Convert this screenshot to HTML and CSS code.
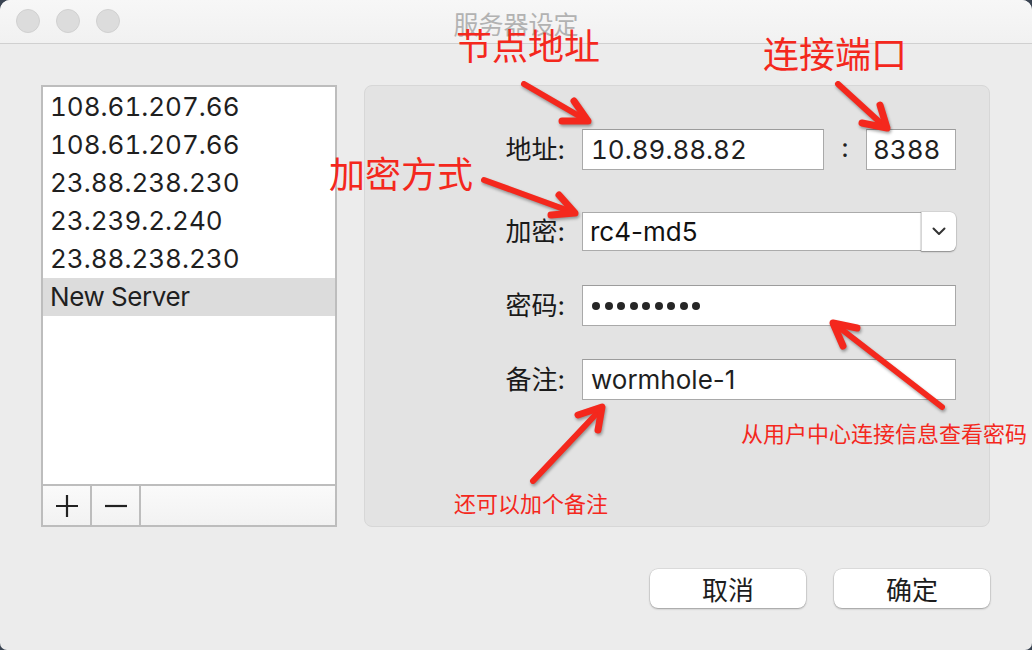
FILE: index.html
```html
<!DOCTYPE html>
<html lang="zh-CN">
<head>
<meta charset="utf-8">
<title>服务器设定</title>
<link rel="stylesheet" href="styles.css">
</head>
<body>
<div class="window">
  <header class="titlebar">
    <div class="lights">
      <span class="light"></span>
      <span class="light"></span>
      <span class="light"></span>
    </div>
    <div class="title">服务器设定</div>
    <div class="spacer"></div>
  </header>

  <main class="content">
    <div class="columns">
      <section class="server-list">
        <ul class="rows">
          <li class="row">108.61.207.66</li>
          <li class="row">108.61.207.66</li>
          <li class="row">23.88.238.230</li>
          <li class="row">23.239.2.240</li>
          <li class="row">23.88.238.230</li>
          <li class="row selected">New Server</li>
        </ul>
        <div class="toolbar">
          <button class="tool" aria-label="添加">
            <svg width="24" height="24" viewBox="0 0 24 24"><path d="M12 1v22M1 12h22" stroke="#222" stroke-width="2.2" fill="none"/></svg>
          </button>
          <button class="tool" aria-label="删除">
            <svg width="24" height="24" viewBox="0 0 24 24"><path d="M1 12h22" stroke="#222" stroke-width="2.2" fill="none"/></svg>
          </button>
          <div class="tool-fill"></div>
        </div>
      </section>

      <section class="panel">
        <div class="form-row row-first">
          <span class="label">地址:</span>
          <div class="address-group">
            <div class="field numeric address">10.89.88.82</div>
            <span class="colon">:</span>
            <div class="field numeric port">8388</div>
          </div>
        </div>
        <div class="form-row row-combo">
          <span class="label">加密:</span>
          <div class="combo">
            <div class="combo-text">rc4-md5</div>
            <div class="combo-btn">
              <svg width="14" height="9" viewBox="0 0 14 9"><path d="M1.5 1.5l5.5 5.5 5.5-5.5" stroke="#333" stroke-width="2" fill="none" stroke-linecap="round" stroke-linejoin="round"/></svg>
            </div>
          </div>
        </div>
        <div class="form-row">
          <span class="label">密码:</span>
          <div class="field password" aria-label="password">
            <span class="dot"></span><span class="dot"></span><span class="dot"></span><span class="dot"></span><span class="dot"></span><span class="dot"></span><span class="dot"></span><span class="dot"></span><span class="dot"></span>
          </div>
        </div>
        <div class="form-row">
          <span class="label">备注:</span>
          <div class="field">wormhole-1</div>
        </div>
      </section>
    </div>

    <div class="actions">
      <button class="btn">取消</button>
      <button class="btn">确定</button>
    </div>
  </main>

  <div class="annotations">
    <span class="note big note-addr">节点地址</span>
    <span class="note big note-port">连接端口</span>
    <span class="note big note-enc">加密方式</span>
    <span class="note small note-pass">从用户中心连接信息查看密码</span>
    <span class="note small note-remark">还可以加个备注</span>
    <svg class="arrows" width="1032" height="650" viewBox="0 0 1032 650">
      <g stroke="#f4281d" fill="none" stroke-linecap="round" stroke-linejoin="round">
        <path d="M524 84L586 120" stroke-width="6"/>
        <path d="M562 121L588 121L574 101" stroke-width="7"/>
        <path d="M838 84L884 126" stroke-width="6"/>
        <path d="M862 123L887 128L880 105" stroke-width="7"/>
        <path d="M484 180L572 212" stroke-width="6"/>
        <path d="M551 215L575 213L559 195" stroke-width="7"/>
        <path d="M942 407L836 325" stroke-width="6"/>
        <path d="M857 328L833 323L843 346" stroke-width="7"/>
        <path d="M533 481L600 410" stroke-width="6"/>
        <path d="M578 415L602 407L598 430" stroke-width="7"/>
      </g>
    </svg>
  </div>
</div>
</body>
</html>
```

FILE: styles.css
```css
* {
  box-sizing: border-box;
}

html, body {
  margin: 0;
  padding: 0;
}

body {
  width: 1032px;
  height: 650px;
  background: #3a4452;
  font-family: Inter, "Noto Sans CJK SC", sans-serif;
  color: #222;
  overflow: hidden;
}

.window {
  position: relative;
  width: 1032px;
  height: 650px;
  background: #ececec;
  border-radius: 10px 10px 7px 7px;
  overflow: hidden;
  display: flex;
  flex-direction: column;
}

/* ---------- Title bar ---------- */
.titlebar {
  height: 44px;
  flex: none;
  display: grid;
  grid-template-columns: 1fr auto 1fr;
  align-items: center;
  background: linear-gradient(#f7f7f7, #f1f1f1);
  border-bottom: 1px solid #d0d0d0;
}

.lights {
  display: flex;
  gap: 16px;
  padding-left: 16px;
  padding-bottom: 1px;
}

.light {
  width: 24px;
  height: 24px;
  border-radius: 50%;
  background: #dcdcdc;
  border: 1px solid #d0d0d0;
}

.title {
  font-family: "Noto Sans CJK SC", sans-serif;
  font-size: 25px;
  line-height: 30px;
  color: #b2b2b2;
  padding-top: 2px;
}

/* ---------- Content ---------- */
.content {
  flex: 1;
  padding: 41px 42px 0 41px;
  display: flex;
  flex-direction: column;
}

.columns {
  display: flex;
  gap: 27px;
  height: 442px;
}

/* Server list */
.server-list {
  width: 297px;
  height: 442px;
  background: #fff;
  border: 2px solid #bdbdbd;
  display: flex;
  flex-direction: column;
}

.rows {
  list-style: none;
  margin: 0;
  padding: 1px 0 0;
  flex: 1;
}

.row {
  height: 38px;
  line-height: 38px;
  padding-left: 7px;
  font-size: 26px;
  font-variant-numeric: tabular-nums;
  color: #1f1f1f;
  white-space: nowrap;
}

.row.selected {
  background: #dcdcdc;
  letter-spacing: -0.4px;
}

.toolbar {
  height: 41px;
  border-top: 2px solid #bdbdbd;
  display: flex;
  background: linear-gradient(#fafafa, #f2f2f2);
}

.tool {
  width: 49px;
  height: 100%;
  border: 0;
  border-right: 2px solid #bdbdbd;
  background: transparent;
  padding: 0;
  display: flex;
  align-items: center;
  justify-content: center;
}

.tool-fill {
  flex: 1;
}

/* Settings panel */
.panel {
  width: 626px;
  height: 442px;
  background: #e3e3e3;
  border: 1px solid #d7d7d7;
  border-radius: 8px;
  padding: 41px 33px 0 0;
}

.form-row {
  display: grid;
  grid-template-columns: 200px 374px;
  column-gap: 17px;
  height: 41px;
  align-items: center;
  margin-top: 33px;
}

.form-row.row-first {
  margin-top: 0;
}

.form-row.row-combo {
  margin-top: 43px;
}

.label {
  text-align: right;
  font-size: 26px;
  line-height: 41px;
  color: #1a1a1a;
}

.field {
  height: 41px;
  background: #fff;
  border: 1px solid #a9a9a9;
  border-top-color: #9c9c9c;
  font-size: 26px;
  line-height: 39px;
  padding-left: 8px;
  color: #1f1f1f;
  white-space: nowrap;
}

.field.numeric {
  font-variant-numeric: tabular-nums;
}

.address-group {
  display: flex;
  align-items: center;
}

.field.address {
  width: 242px;
}

.colon {
  width: 42px;
  text-align: center;
  font-size: 26px;
  line-height: 41px;
  padding-bottom: 4px;
}

.field.port {
  width: 90px;
  padding-left: 6px;
}

.field.password {
  display: flex;
  align-items: center;
  gap: 4.5px;
  padding-left: 9px;
}

.dot {
  width: 8px;
  height: 8px;
  border-radius: 50%;
  background: #262626;
}

/* Combo box */
.combo {
  display: flex;
  height: 39px;
}

.combo-text {
  flex: 1;
  background: #fff;
  border: 1px solid #ababab;
  border-right: 0;
  font-size: 26px;
  line-height: 37px;
  padding-left: 7px;
  color: #111;
}

.combo-btn {
  width: 35px;
  background: #fff;
  border-left: 1px solid #d6d6d6;
  border-radius: 0 6px 6px 0;
  box-shadow: 0 1px 1.5px rgba(0, 0, 0, 0.35), 0 0 0 0.5px rgba(0, 0, 0, 0.12);
  display: flex;
  align-items: center;
  justify-content: center;
  padding-bottom: 1px;
}

/* Buttons */
.actions {
  display: flex;
  justify-content: flex-end;
  gap: 28px;
  margin-top: 42px;
}

.btn {
  width: 156px;
  height: 39px;
  background: #fff;
  border: 0;
  border-radius: 8px;
  box-shadow: 0 1px 2px rgba(0, 0, 0, 0.3), 0 0 0 0.5px rgba(0, 0, 0, 0.12);
  font-family: "Noto Sans CJK SC", sans-serif;
  font-size: 26px;
  line-height: 37px;
  color: #1d1d1d;
  padding: 0;
}

/* ---------- Annotations (overlay) ---------- */
.annotations {
  position: absolute;
  inset: 0;
  pointer-events: none;
}

.arrows {
  position: absolute;
  left: 0;
  top: 0;
  filter: drop-shadow(1px 2px 1.5px rgba(0, 0, 0, 0.35));
}

.note {
  position: absolute;
  font-family: "Noto Sans CJK SC", sans-serif;
  color: #f4281d;
  line-height: 1;
  white-space: nowrap;
}

.note.big {
  font-size: 36px;
}

.note.small {
  font-size: 22px;
}

.note-addr {
  left: 456px;
  top: 26px;
}

.note-port {
  left: 763px;
  top: 34px;
}

.note-enc {
  left: 329px;
  top: 154px;
}

.note-pass {
  left: 741px;
  top: 421px;
}

.note-remark {
  left: 454px;
  top: 491px;
}
```
